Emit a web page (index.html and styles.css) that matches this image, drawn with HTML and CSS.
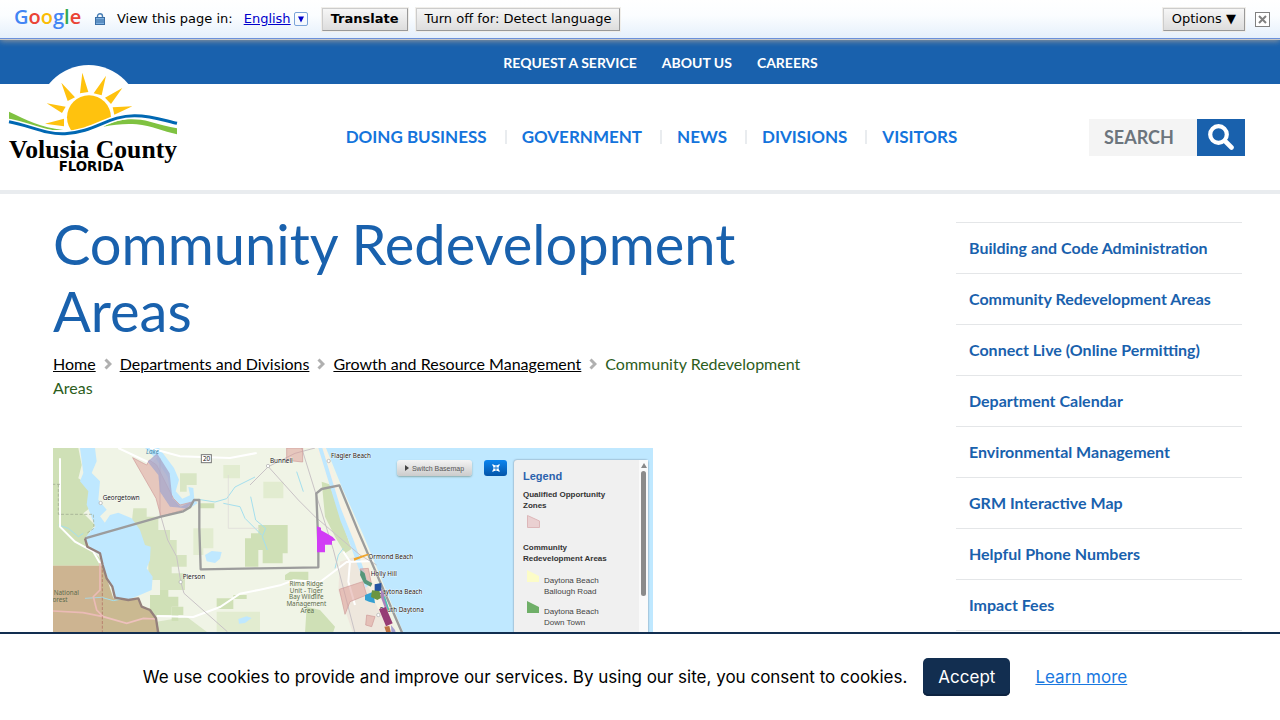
FILE: index.html
```html
<!DOCTYPE html>
<html lang="en">
<head>
    <meta charset="UTF-8">
    <meta name="viewport" content="width=device-width, initial-scale=1.0">
    <title>Community Redevelopment Areas</title>
    <link rel="stylesheet" href="styles.css">
</head>
<body>
    <!-- Translate toolbar -->
    <div class="translate-bar">
        <span class="google"><span class="g-blue">G</span><span class="g-red">o</span><span class="g-yellow">o</span><span class="g-blue">g</span><span class="g-green">l</span><span class="g-red">e</span></span>
        <svg class="lock" width="10" height="12" viewBox="0 0 10 12" aria-hidden="true">
            <path d="M2.5 5V3.2a2.5 2.5 0 0 1 5 0V5" fill="none" stroke="#4a7fb5" stroke-width="1.4"/>
            <rect x="0.5" y="4.5" width="9" height="7" fill="#7fb0e0" stroke="#3a6ea5"/>
            <path d="M1 7h8M1 9h8" stroke="#3a6ea5"/>
        </svg>
        <span class="view-label">View this page in:</span>
        <a class="language" href="#"><span class="language-name">English</span><span class="language-arrow"><svg width="8" height="7" viewBox="0 0 8 7" aria-hidden="true"><path d="M1 0.5h6L4 6.5z" fill="#0000cc"/></svg></span></a>
        <button type="button" class="bar-btn bar-btn-main">Translate</button>
        <button type="button" class="bar-btn">Turn off for: Detect language</button>
        <button type="button" class="bar-btn bar-options">Options ▼</button>
        <button type="button" class="bar-close" aria-label="Close">
            <svg width="15" height="15" viewBox="0 0 15 15" aria-hidden="true">
                <rect x="0.5" y="0.5" width="14" height="14" fill="#fff" stroke="#808080"/>
                <path d="M4 4l7 7M11 4l-7 7" stroke="#808080" stroke-width="2"/>
            </svg>
        </button>
    </div>

    <header>
        <nav class="top-links" aria-label="Quick links">
            <a href="#">REQUEST A SERVICE</a>
            <a href="#">ABOUT US</a>
            <a href="#">CAREERS</a>
        </nav>
        <div class="site-header">
            <a class="logo" href="#" aria-label="Volusia County Florida">
                <svg width="168" height="106" viewBox="27 75 504 318">
                    <circle cx="266" cy="228" r="153" fill="#fff"/>
                    <g fill="#ffc20e">
                        <circle cx="267" cy="232" r="66"/>
                        <path d="M247 98l-7 62 25-4zM318 107l-37 53 24 6zM367 144l-52 29 18 19zM397 199l-59 3 5 22zM184 128l19 55 22-11zM140 190l46 29 11-19zM135 251l57-15v23z"/>
                    </g>
                    <path d="M27 240C90 252 140 288 210 280C290 270 330 225 410 226C460 227 500 244 531 250V300H27z" fill="#fff"/>
                    <path d="M27 215C80 240 120 262 190 270C120 272 75 254 27 236z" fill="#7fc241"/>
                    <path d="M310 260C350 236 400 232 450 245C480 254 505 260 531 265V283C490 274 455 258 410 253C375 250 345 254 310 260z" fill="#7fc241"/>
                    <path d="M27 245C90 256 135 284 195 281C285 277 325 226 405 227C455 227 495 242 531 250" fill="none" stroke="#fff" stroke-width="18"/>
                    <path d="M27 245C90 256 135 284 195 281C285 277 325 226 405 227C455 227 495 242 531 250" fill="none" stroke="#0068b3" stroke-width="9"/>
                    <text class="logo-name" x="27" y="355">Volusia County</text>
                    <text class="logo-state" x="176" y="392">FLORIDA</text>
                </svg>
            </a>
            <nav class="main-nav" aria-label="Main">
                <a href="#">DOING BUSINESS</a>
                <a href="#">GOVERNMENT</a>
                <a href="#">NEWS</a>
                <a href="#">DIVISIONS</a>
                <a href="#">VISITORS</a>
            </nav>
            <form class="search">
                <input type="text" placeholder="SEARCH" aria-label="Search">
                <button type="submit" aria-label="Search">
                    <svg width="26" height="26" viewBox="0 0 26 26" aria-hidden="true">
                        <circle cx="10.5" cy="10.5" r="8.3" fill="none" stroke="#fff" stroke-width="4.2"/>
                        <path d="M17 17l6.5 6.5" stroke="#fff" stroke-width="4.6" stroke-linecap="round"/>
                    </svg>
                </button>
            </form>
        </div>
    </header>

    <div class="page">
        <main class="content">
            <h1>Community Redevelopment Areas</h1>
            <nav class="breadcrumbs" aria-label="Breadcrumb">
                <a href="#">Home</a><svg class="chevron" width="8" height="12" viewBox="0 0 8 12"><path d="M1.5 1.5L6 6l-4.5 4.5"/></svg><a href="#">Departments and Divisions</a><svg class="chevron" width="8" height="12" viewBox="0 0 8 12"><path d="M1.5 1.5L6 6l-4.5 4.5"/></svg><a href="#">Growth and Resource Management</a><svg class="chevron" width="8" height="12" viewBox="0 0 8 12"><path d="M1.5 1.5L6 6l-4.5 4.5"/></svg><span>Community Redevelopment Areas</span>
            </nav>

            <div class="map">
                <svg class="map-drawing" viewBox="9 9 1800 780" role="img" aria-label="Map of redevelopment areas">
                    <rect x="9" y="9" width="1800" height="780" fill="#f0f4e6"/>
                    <!-- woodland -->
                    <g fill="#cfe0b6">
                        <path d="M9 9H85L95 60 85 100 115 120 130 180 100 205 135 240 105 280 120 310 150 340V362H9z"/>
                        <path d="M250 190h40v25h35v40h35v30h20v45h30v35h-45v20h40v50h-75v-30h-35v-60l-20-60-30-50z" opacity=".8"/>
                        <path d="M300 450h30v-15h25v20h30v30h-20v25h-45v20h-40v-40h20z"/>
                        <path d="M365 485h35v25h-15v18h-20zM500 460h50v-10h40v12h-40v30h-50zM445 175h48v15h-48zM585 280h40v85h-40z"/>
                        <path d="M320 530l90-15 60 45v50H325zM390 85h50v35h-30v20h-20z" opacity=".7"/>
                        <path d="M625 240h88v85h-15v30h-60v-40h-35v-50h22z"/>
                        <path d="M720 380h55v25h-70v-15zM770 485l40 10 45 50-20 60H740l25-40z"/>
                        <path d="M815 110l30 10 30 60 10 60 25 5 5 60-30 20-30-50-30-60z"/>
                    </g>
                    <g fill="#e2ecd0">
                        <path d="M430 250h60v60h-30v20h-30zM520 60h50v40h-50zM640 110h60v50h-60zM500 500h130v60H500z"/>
                    </g>
                    <path d="M9 362H158L190 460 235 465 265 463 275 485 300 495 318 520 330 567V789H9z" fill="#cab991"/>
                    <!-- built-up coast -->
                    <path d="M870 350l60-20 60 110 50 127H910l-45-130z" fill="#eee7dd"/>
                    <path d="M800 9h28l35 120 65 145 110 290h-22L900 300 850 150z" fill="#f7f1e3"/>
                    <!-- water -->
                    <g fill="#bfe8ff">
                        <path d="M828 9L875 125 940 270 1062 567 1180 789H1809V9z"/>
                        <path d="M90 9h45l5 40-15 35 25 25-5 55 25 30-20 20 15 20-10 40-20-30-15-40-10-25 5-40-25-30 10-25z"/>
                        <path d="M105 280L130 248 160 240 180 210 205 203 245 220 270 255 285 300 302 305 300 345 290 370 308 395 305 435 270 450 240 462 195 460 185 420 165 380 150 330 125 315z"/>
                        <path d="M285 9h42l45 60 15 35-10 35 20 22 23-10-5-25 15 3 3 35 10 10-30 20-30-8-20-30-10-60-35-55z"/>
                        <path d="M465 330l20-12 30 3-5 20-15 13-25-5zM565 522l25-8 15 5-20 15-18 2z"/>
                        <path d="M805 9h12l55 180 40 100 45 130-10 10-50-140-25-60z"/>
                    </g>
                    <g fill="none" stroke="#a4dfee" stroke-width="3">
                        <path d="M445 163l50 8 35-10 25-35 60-30M520 175l50 10 15 35 50 50M25 240l30 10 30 25 15-10M105 460l50-3 35 10 25-5"/>
                        <path d="M602 155l15 70 30 25-10 25 15 40M740 80l20 60M855 370l10-40 15-20"/>
                    </g>
                    <!-- roads -->
                    <g fill="none" stroke="#fff" stroke-width="6">
                        <path d="M30 40V245L75 290 130 320 150 355M205 9l95 45 20-20M320 513l110 3 80-30 60-40 60-12 60-13 40-15 80 5 80-60 80-3M880 320l20 30-5 60 20 70M300 9l90 25 150 5 80-15"/>
                    </g>
                    <g fill="none" stroke="#c9c3c6" stroke-width="3">
                        <path d="M333 215l20 70 27 50 12 75 10 35 130 115M330 40v175M600 120l55-55 80-40 60-16M655 65l90 100 50 50 135 115 50 30M755 9l45 145 50 160 65 250"/>
                        <path d="M535 90v160h95" stroke="#ddd9d6" stroke-width="2"/>
                    </g>
                    <path d="M30 118H9M25 118V208H130L132 250 110 265" fill="none" stroke="#9aa58b" stroke-width="2" stroke-dasharray="9 5"/>
                    <path d="M150 355v80l-20 20 10 40 20 20 70 20 50-15 40 2M9 498l90 5 60 12" fill="none" stroke="#eec1bd" stroke-width="5"/>
                    <path d="M157 360V567" fill="none" stroke="#a9655a" stroke-width="2" stroke-dasharray="9 5"/>
                    <!-- opportunity zones -->
                    <g fill="#dc9a94" fill-opacity=".5" stroke="#cf9a98" stroke-width="2">
                        <path d="M248 38L290 60 298 45 320 60 370 160 390 180 430 170 415 190 333 215 318 160z"/>
                        <path d="M710 9h48v42l-48-5zM868 433l70-23 12 40-50 20-15 38zM950 510l25 5-10 30-18-5z"/>
                        <path d="M9 362H158V567H9z" stroke="none" fill-opacity=".15"/>
                        <path d="M930 372l25-2 10 50-20-10z"/>
                    </g>
                    <path d="M293 50l28-25 38 60 8 75 25 25 38-17-20 22-50-5-30-45-5-50z" fill="#a9a9cc" fill-opacity=".8"/>
                    <!-- county line -->
                    <g fill="none" stroke="#9c9c9c" stroke-width="7" stroke-linejoin="round">
                        <path d="M105 280L333 215 400 199 420 187 432 165H448V250L452 373 630 370 805 367V300L799 145 815 132 868 121 925 260 1055 560 1160 789"/>
                        <path d="M105 280L112 305 150 325 158 360 170 400 187 425 195 458 235 465 265 460 275 485 300 495 318 520 325 567V640" stroke="#94807c"/>
                    </g>
                    <g fill="#fff" stroke="#aaa" stroke-width="2">
                        <circle cx="152" cy="174" r="5"/>
                        <circle cx="392" cy="411" r="5"/>
                        <circle cx="654" cy="63" r="5"/>
                        <circle cx="836" cy="48" r="5"/>
                        <circle cx="985" cy="510" r="5"/>
                        <rect x="454" y="29" width="30" height="24" stroke="#777" stroke-width="3"/>
                    </g>
                    <g class="map-labels">
                        <text x="158" y="166">Georgetown</text>
                        <text x="398" y="402">Pierson</text>
                        <text x="660" y="54">Bunnell</text>
                        <text x="843" y="40">Flagler Beach</text>
                        <text x="955" y="341">Ormond Beach</text>
                        <text x="962" y="394">Holly Hill</text>
                        <text x="983" y="447">Daytona Beach</text>
                        <text x="989" y="502">South Daytona</text>
                        <text x="459" y="48">20</text>
                    </g>
                    <!-- redevelopment areas -->
                    <path d="M801 244l12 4v8l15 8 20 12 9 10-11 2v11h-21v23h-24z" fill="#d13cf5"/>
                    <path d="M911 340l42-14 3 4-43 17z" fill="#efa52c"/>
                    <path d="M932 375l12 10 5 20 18 10-5 10-20-10-12-25z" fill="#57967a"/>
                    <path d="M974 418l20-4v23l-20 2z" fill="#2454a2"/>
                    <path d="M945 450l25-10 5 35-18-5-12-5z" fill="#35a0d2"/>
                    <path d="M966 436l22 2 6 20-12 7-19-9z" fill="#6b9540"/>
                    <path d="M993 430l8 15 14 45-8 5-15-40z" fill="#aa83bd"/>
                    <path d="M1003 455l13 40" stroke="#43c8b3" stroke-width="4"/>
                    <path d="M987 493l20-7 21 49-20 9z" fill="#963d75"/>
                    <path d="M1003 545l15-2 5 20h-14z" fill="#bd7444"/>
                    <path d="M1023 540l12 15 5 20-15-5z" fill="#a5a0d1"/>
                    <text class="map-lake" x="288" y="27">Lake</text>
                    <g class="map-park">
                        <text x="49" y="450">National</text>
                        <text x="30" y="470">orest</text>
                        <text x="769" y="423">Rima Ridge</text>
                        <text x="769" y="443">Unit - Tiger</text>
                        <text x="769" y="463">Bay Wildlife</text>
                        <text x="769" y="483">Management</text>
                        <text x="772" y="503">Area</text>
                    </g>
                </svg>
                <button type="button" class="basemap-btn"><svg width="4" height="6" viewBox="0 0 4 6" aria-hidden="true"><path d="M0 0l4 3-4 3z" fill="#444"/></svg>Switch Basemap</button>
                <button type="button" class="expand-btn" aria-label="Full extent">
                    <svg width="8" height="8" viewBox="0 0 8 8" aria-hidden="true"><path d="M0.5 0.5l2.5 2.5M7.5 0.5L5 3M0.5 7.5L3 5M7.5 7.5L5 5M3 1v2H1M5 1v2h2M1 5h2v2M7 5H5v2" fill="none" stroke="#fff" stroke-width="1.2"/></svg>
                </button>
                <div class="legend">
                    <div class="legend-body">
                        <h2>Legend</h2>
                        <h3>Qualified Opportunity Zones</h3>
                        <svg class="swatch" width="13" height="13" viewBox="0 0 13 13"><path d="M0.5 0.5L12.5 6v6.5H0.5z" fill="#ead0d1" stroke="#ddb7b9"/></svg>
                        <h3 class="legend-next">Community Redevelopment Areas</h3>
                        <div class="legend-row">
                            <svg class="swatch" width="13" height="13" viewBox="0 0 13 13"><path d="M0 0l12 6v6H0z" fill="#fcfcc8"/></svg>
                            <span>Daytona Beach Ballough Road</span>
                        </div>
                        <div class="legend-row">
                            <svg class="swatch" width="13" height="13" viewBox="0 0 13 13"><path d="M0 0l12 6v6H0z" fill="#6faf68"/></svg>
                            <span>Daytona Beach Down Town</span>
                        </div>
                        <div class="legend-row">
                            <svg class="swatch" width="13" height="13" viewBox="0 0 13 13"><path d="M0 0l12 6v6H0z" fill="#2f6bc0"/></svg>
                        </div>
                    </div>
                    <div class="legend-scroll">
                        <svg width="6" height="5" viewBox="0 0 6 5" aria-hidden="true"><path d="M3 0l3 5H0z" fill="#888"/></svg>
                        <div class="legend-thumb"></div>
                    </div>
                </div>
            </div>
        </main>

        <aside class="sidebar">
            <ul>
                <li><a href="#">Building and Code Administration</a></li>
                <li><a href="#">Community Redevelopment Areas</a></li>
                <li><a href="#">Connect Live (Online Permitting)</a></li>
                <li><a href="#">Department Calendar</a></li>
                <li><a href="#">Environmental Management</a></li>
                <li><a href="#">GRM Interactive Map</a></li>
                <li><a href="#">Helpful Phone Numbers</a></li>
                <li><a href="#">Impact Fees</a></li>
            </ul>
        </aside>
    </div>

    <div class="cookies">
        <p>We use cookies to provide and improve our services. By using our site, you consent to cookies.</p>
        <button type="button">Accept</button>
        <a href="#">Learn more</a>
    </div>
</body>
</html>
```
FILE: styles.css
```css
* {
    box-sizing: border-box;
}
body {
    margin: 0;
    font-family: Lato, sans-serif;
    font-size: 16px;
    line-height: 24px;
    color: #000;
    background: #fff;
}

/* translate toolbar */
.translate-bar {
    display: flex;
    align-items: center;
    height: 40px;
    padding: 0 10px 1px 14px;
    font-family: "DejaVu Sans", sans-serif;
    font-size: 13px;
    line-height: 16px;
    background: linear-gradient(#fff, #fbfdff 40%, #e4effb);
    border-bottom: 1px solid #c8c8c8;
    box-shadow: inset 0 -1px #6b90da, 0 1px 6px #999;
    position: relative;
}
.google {
    width: 67px;
    margin-bottom: 4px;
    font-family: "Open Sans", sans-serif;
    font-size: 20px;
    font-weight: 600;
    line-height: 24px;
}
.g-blue { color: #4285f4; }
.g-red { color: #ea4335; }
.g-yellow { color: #fbbc05; }
.g-green { color: #34a853; }
.lock {
    margin: 0 12px 0 14px;
}
.language {
    display: flex;
    align-items: center;
    gap: 3px;
    margin: 0 14px 0 11px;
    color: #0000cc;
    text-decoration: none;
}
.language-name {
    text-decoration: underline;
}
.language-arrow {
    display: flex;
    align-items: center;
    justify-content: center;
    width: 14px;
    height: 14px;
    border: 1px solid #7ba4d9;
    border-radius: 2px;
}
.bar-btn {
    height: 23px;
    margin-right: 8px;
    padding: 0 8px 1px;
    font-family: inherit;
    font-size: 13px;
    color: #000;
    white-space: nowrap;
    background: linear-gradient(#f6f6f6, #ddd);
    border: 1px solid;
    border-color: #ccc #999 #999 #ccc;
    box-shadow: 0 0 0 1px #f0eeea;
}
.bar-btn-main {
    font-weight: bold;
}
.bar-options {
    margin-left: auto;
    margin-right: 10px;
}
.bar-close {
    display: flex;
    padding: 0;
    border: none;
    background: none;
}

/* header */
.top-links {
    display: flex;
    align-items: center;
    justify-content: center;
    gap: 25px;
    height: 44px;
    padding: 1px 0 0 41px;
    background: #1961ad;
}
.top-links a {
    font-size: 14px;
    font-weight: bold;
    color: #fff;
    text-decoration: none;
}
.site-header {
    display: flex;
    align-items: center;
    height: 110px;
    padding: 0 35px 0 9px;
    border-bottom: 4px solid #e9ecef;
}
.logo {
    align-self: flex-start;
    width: 205px;
    margin-top: -19px;
}
.logo svg {
    display: block;
    overflow: visible;
}
.logo-name {
    font-family: "Liberation Serif", serif;
    font-size: 77px;
    font-weight: bold;
}
.logo-state {
    font-family: "DejaVu Sans", sans-serif;
    font-size: 40px;
    font-weight: bold;
}
.main-nav {
    display: flex;
    flex: 1;
    justify-content: center;
}
.main-nav a {
    display: flex;
    align-items: center;
    font-size: 17px;
    font-weight: bold;
    color: #1474dc;
    text-decoration: none;
}
.main-nav a + a::before {
    content: "";
    width: 2px;
    height: 14px;
    margin: 0 15px 0 18px;
    background: #e9ecef;
}
.search {
    display: flex;
    width: 156px;
    height: 37px;
}
.search input {
    flex: 1;
    min-width: 0;
    padding: 0 15px;
    font-family: inherit;
    font-size: 18px;
    font-weight: bold;
    background: #f4f4f4;
    border: none;
}
.search input::placeholder {
    color: #6c757d;
    opacity: 1;
}
.search button {
    display: flex;
    align-items: center;
    justify-content: center;
    width: 48px;
    padding: 0;
    background: #1961ad;
    border: none;
}

/* page body */
.page {
    display: flex;
    justify-content: space-between;
    padding: 0 38px 0 53px;
}
.content {
    flex: 1;
    max-width: 770px;
    padding-top: 16px;
}
h1 {
    margin: 0 0 8px;
    font-size: 56px;
    font-weight: normal;
    line-height: 67px;
    color: #1961ad;
}
.breadcrumbs a {
    color: #000;
}
.breadcrumbs span {
    color: #2c5d1c;
}
.chevron {
    margin: 0 8px;
    fill: none;
    stroke: #b0b0b0;
    stroke-width: 3;
}
.sidebar {
    width: 286px;
    padding-top: 28px;
}
.sidebar ul {
    margin: 0;
    padding: 0;
    list-style: none;
    border-top: 1px solid #e4e6e8;
}
.sidebar li {
    border-bottom: 1px solid #e4e6e8;
}
.sidebar a {
    display: block;
    padding: 13px;
    font-weight: bold;
    color: #1961ad;
    text-decoration: none;
}

/* map */
.map {
    position: relative;
    max-width: 600px;
    margin-top: 48px;
    font-family: "Liberation Sans", sans-serif;
    overflow: hidden;
}
.map-drawing {
    display: block;
    width: 100%;
}
.map-labels,
.map-park,
.map-lake {
    font-family: "Noto Sans", sans-serif;
    font-size: 19px;
}
.map-labels {
    fill: #111;
    stroke: #fff;
    stroke-width: 2px;
    paint-order: stroke;
}
.map-park {
    fill: #5c6b4c;
    text-anchor: middle;
}
.map-lake {
    font-style: italic;
    fill: #3f87a8;
}
.basemap-btn,
.expand-btn {
    position: absolute;
    top: 12px;
    display: flex;
    align-items: center;
    justify-content: center;
    height: 16px;
    padding: 0;
    border: none;
    border-radius: 3px;
}
.basemap-btn {
    right: 181px;
    gap: 3px;
    width: 75px;
    font-family: inherit;
    font-size: 7px;
    color: #555;
    background: linear-gradient(#f4f4f4, #ccc);
    box-shadow: 0 1px 2px #8aa;
}
.expand-btn {
    right: 146px;
    width: 23px;
    background: linear-gradient(#0a85f0, #0454a8);
}
.legend {
    position: absolute;
    top: 12px;
    right: 5px;
    bottom: 0;
    display: flex;
    width: 134px;
    background: #f0f0f0;
    border-radius: 3px;
    box-shadow: 0 0 2px #678;
}
.legend-body {
    flex: 1;
    padding: 11px 0 0 9px;
    font-size: 8px;
    line-height: 11px;
    color: #444;
}
.legend h2,
.legend h3 {
    margin: 0;
    font-size: 8px;
    line-height: 11px;
    color: #333;
}
.legend h3 {
    width: 96px;
}
.legend h2 {
    margin-bottom: 7px;
    font-size: 11px;
    color: #2b62ad;
}
.legend .swatch {
    display: block;
    flex: none;
    margin: 4px 4px 0;
}
.legend .legend-next {
    margin: 14px 0 10px;
}
.legend-row {
    display: flex;
    height: 31px;
}
.legend-row .swatch {
    margin-top: -4px;
}
.legend-row span {
    width: 64px;
    padding-top: 1px;
}
.legend-scroll {
    width: 9px;
    padding: 3px 2px;
    line-height: 0;
    background: #fafafa;
}
.legend-thumb {
    width: 5px;
    height: 125px;
    margin-top: 3px;
    background: #8b8b8b;
    border-radius: 3px;
}

/* cookie notice */
.cookies {
    position: fixed;
    right: 0;
    bottom: 0;
    left: 0;
    display: flex;
    align-items: center;
    justify-content: center;
    height: 88px;
    padding-right: 10px;
    font-family: Inter, sans-serif;
    font-size: 17px;
    background: #fff;
    border-top: 2px solid #122e50;
}
.cookies p {
    margin: 0 16px 0 0;
}
.cookies button {
    height: 38px;
    margin-right: 25px;
    padding: 0 15px;
    font-family: inherit;
    font-size: 17px;
    color: #fff;
    background: #122e50;
    border: none;
    border-radius: 5px;
    box-shadow: inset 0 -2px #0d2340;
}
.cookies a {
    color: #1a78e0;
}
```
